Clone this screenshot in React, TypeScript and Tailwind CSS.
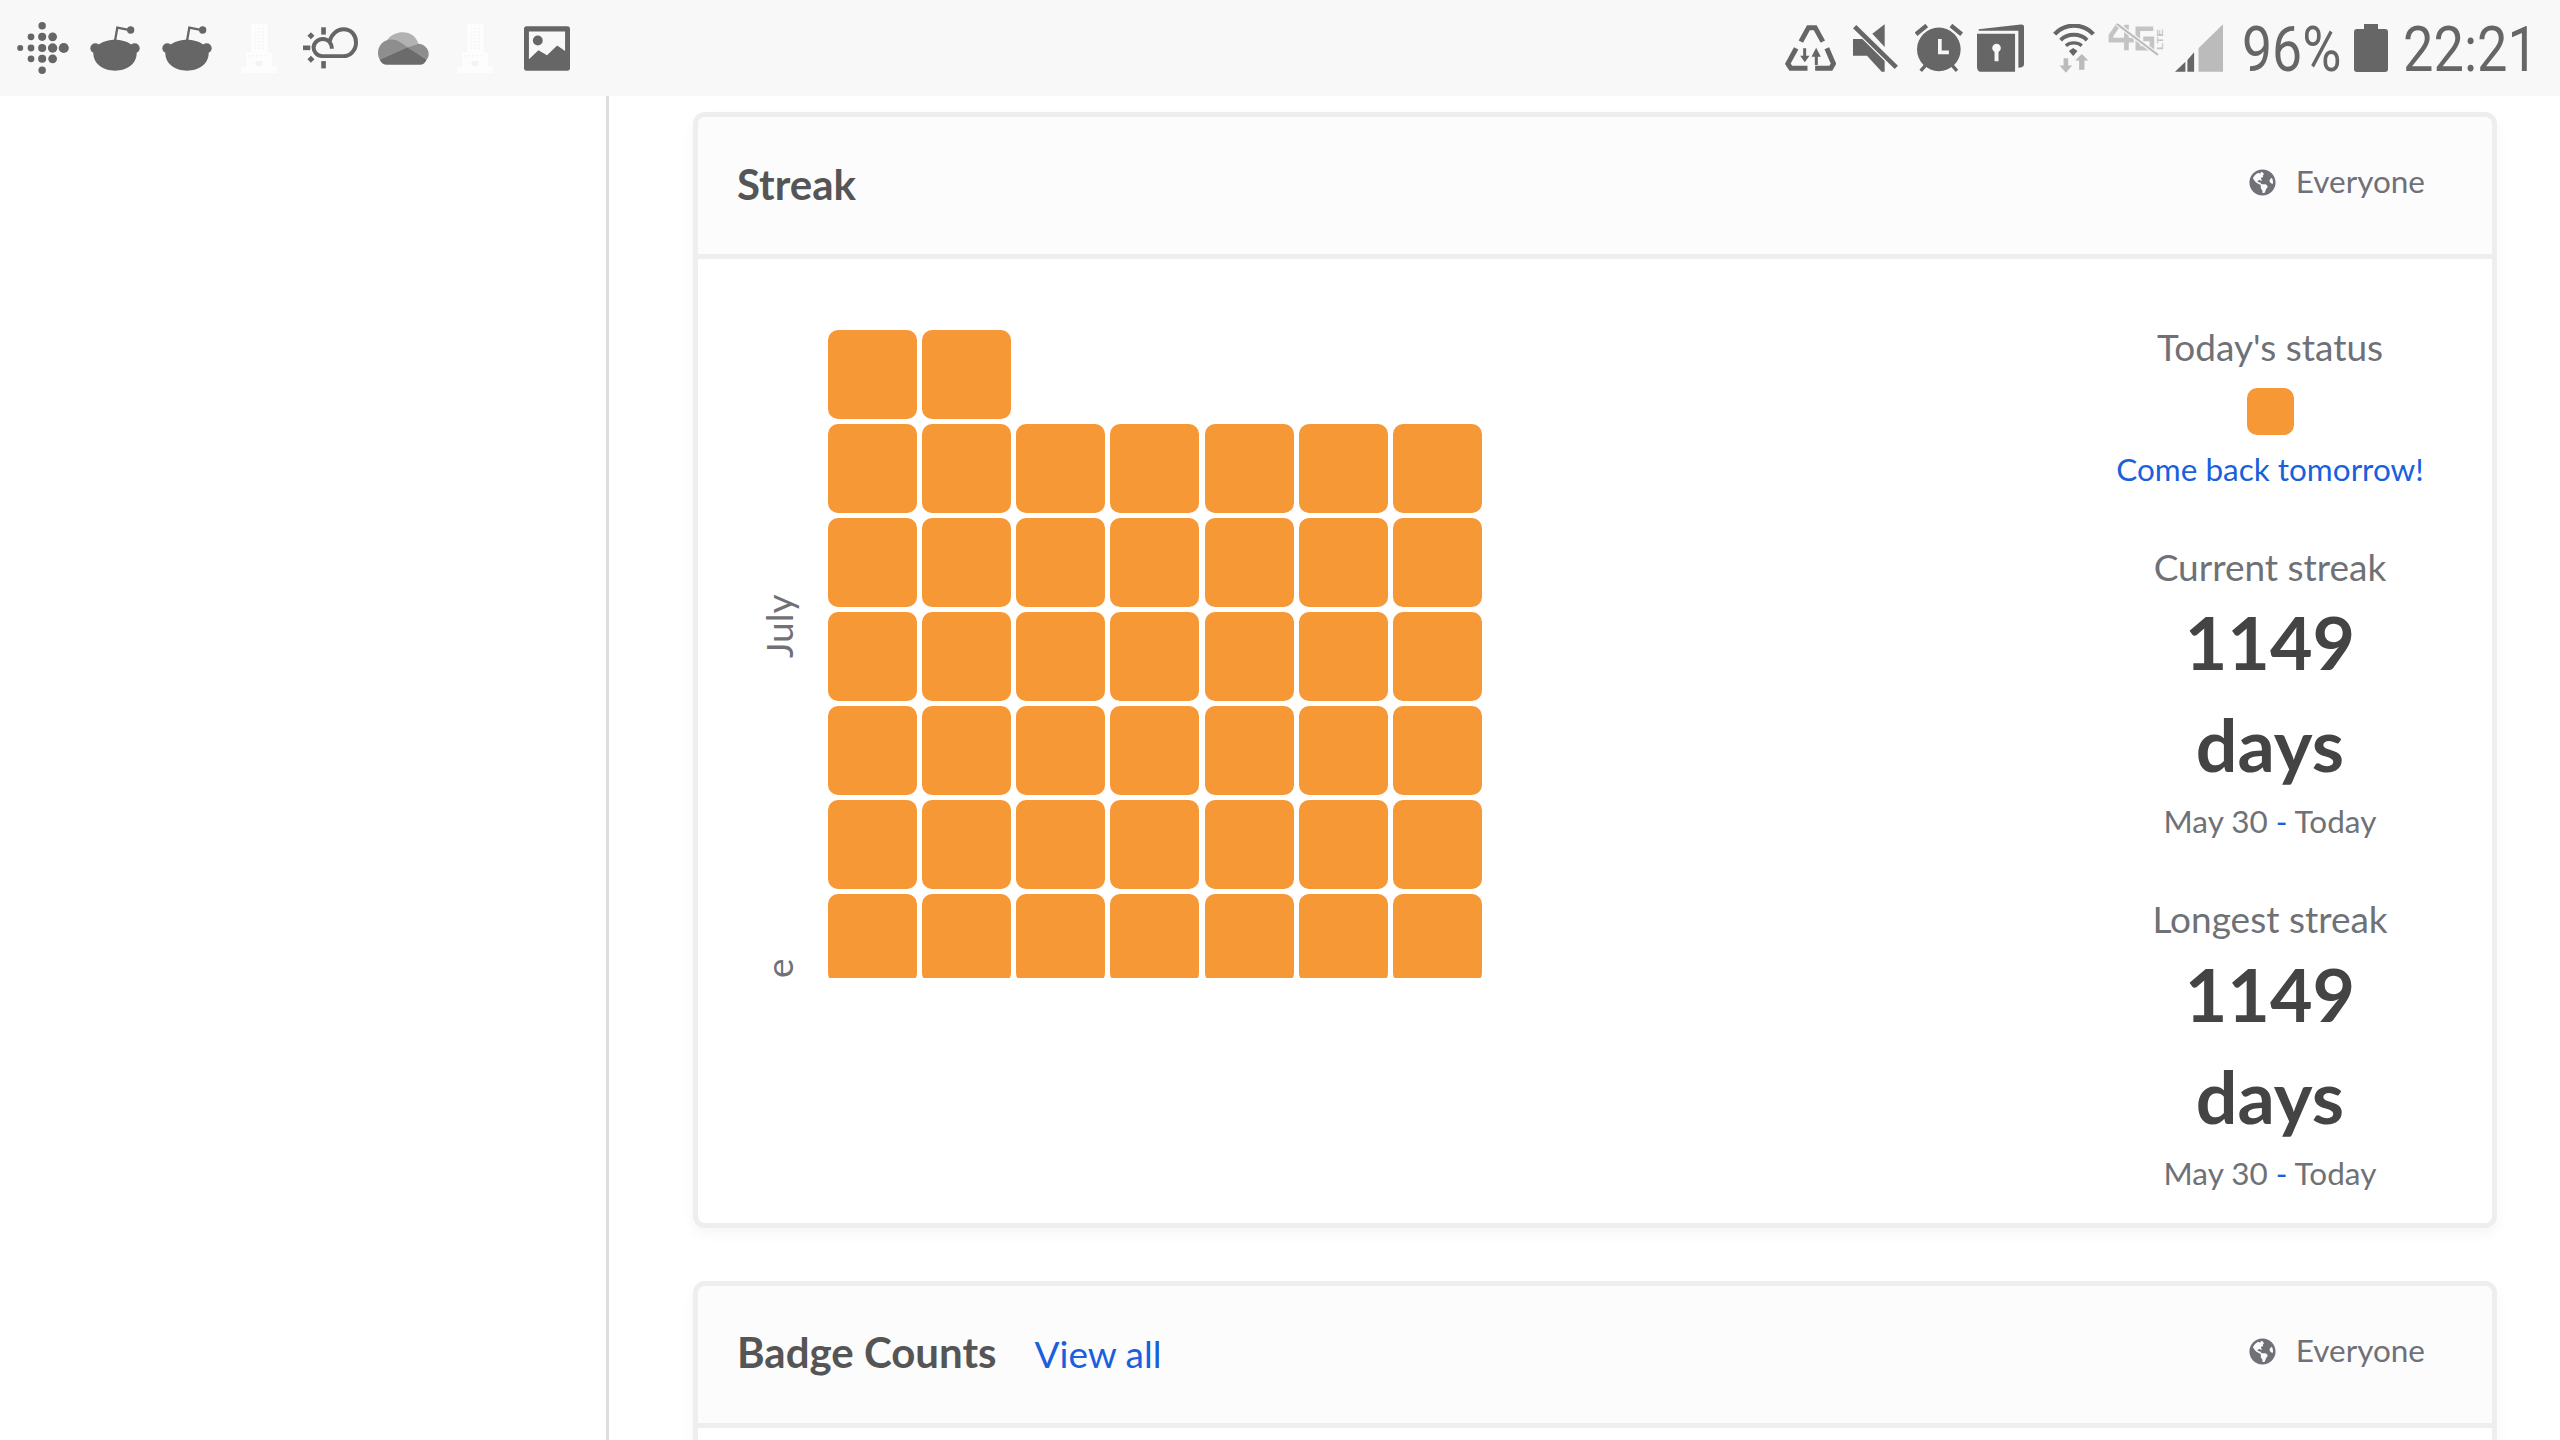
import { FaGlobeAmericas } from "react-icons/fa";

const cells = Array.from({ length: 42 });
const G = "#666666";
const L = "#bbbbbb";
const BG = "#f8f8f8";

function Everyone() {
  return (
    <div className="flex items-center gap-[20px] text-[#6f7177] text-[31.5px] leading-none mb-[7px]">
      <FaGlobeAmericas size={27} color="#6f7177" />
      <span>Everyone</span>
    </div>
  );
}

function StatBlock({ title }: { title: string }) {
  return (
    <div className="flex flex-col items-center mt-[54px]">
      <div className="text-[37px] leading-[44px] text-[#6f7177] whitespace-nowrap">{title}</div>
      <div className="text-[73.500px] leading-[102px] font-bold text-[#444444] text-center mt-[2px]">
        <div>1149</div>
        <div>days</div>
      </div>
      <div className="text-[31.500px] leading-[44px] text-[#6f7177] mt-[4px] whitespace-nowrap">
        May 30 <span className="text-[#1a5fdc]">-</span> Today
      </div>
    </div>
  );
}

function Fitbit() {
  const dots: [number, number, number][] = [
    [31, 99, 9], [63, 66, 10], [63, 99, 10], [63, 131, 10],
    [96, 33, 11], [96, 66, 12], [96, 99, 12], [96, 131, 12], [96, 165, 11],
    [127, 66, 13], [127, 99, 14], [127, 131, 13], [160, 99, 15],
  ];
  return (
    <svg width="52" height="52" viewBox="22 22 153 154">
      {dots.map(([x, y, r], i) => <circle key={i} cx={x} cy={y} r={r} fill={G} />)}
    </svg>
  );
}

function Reddit() {
  return (
    <svg width="50" height="46" viewBox="240 28 150 138">
      <path d="M315 76L322 36L352 42" stroke={G} strokeWidth="7" fill="none" />
      <circle cx="362" cy="43" r="11" fill={G} />
      <circle cx="256" cy="98" r="15" fill={G} />
      <circle cx="374" cy="98" r="15" fill={G} />
      <path d="M250 112C250 88 285 72 315 72C345 72 380 88 380 112C380 145 350 165 315 165C280 165 250 145 250 112z" fill={G} />
    </svg>
  );
}

function Tower() {
  const win: [number, number][] = [];
  for (let r = 0; r < 7; r++) for (let c = 0; c < 3; c++) win.push([44 + c * 11, 36 + r * 10]);
  for (let c = 0; c < 6; c++) win.push([26 + c * 11, 118]);
  return (
    <svg width="36" height="49" viewBox="3 25 107 147">
      <rect x="33" y="25" width="49" height="90" fill="#fdfdfd" />
      <rect x="18" y="110" width="77" height="45" fill="#fdfdfd" />
      <rect x="3" y="152" width="107" height="20" fill="#fdfdfd" />
      {win.map(([x, y], i) => <rect key={i} x={x} y={y} width="5" height="5" fill="#f5f5f5" />)}
      <rect x="46" y="136" width="21" height="14" fill="#f3f3f3" />
    </svg>
  );
}

function SunCloud() {
  return (
    <svg width="55" height="42" viewBox="190 38 166 125" fill="none">
      <path d="M270 82C275 60 292 44 312 44C336 44 350 62 350 84C350 108 332 125 312 125L248 125C232 125 222 112 222 100C222 85 235 73 250 73C266 73 277 86 277 103" stroke={G} strokeWidth="12" />
      <rect x="245" y="38" width="14" height="22" fill={G} />
      <rect x="245" y="140" width="14" height="22" fill={G} />
      <rect x="190" y="93" width="22" height="14" fill={G} />
      <rect x="206" y="56" width="15" height="15" fill={G} transform="rotate(45 214 64)" />
      <rect x="206" y="127" width="15" height="15" fill={G} transform="rotate(45 214 135)" />
    </svg>
  );
}

function OneDrive() {
  return (
    <svg width="52" height="33" viewBox="410 50 157 98">
      <path d="M440 75C450 58 470 50 488 50C510 50 528 62 535 85L505 97z" fill="#b2b2b2" />
      <path d="M418 132C404 105 420 72 455 72C470 72 485 82 502 96z" fill="#8e8e8e" />
      <path d="M502 96L535 85C550 85 566 100 566 115C566 122 564 128 560 132z" fill="#8e8e8e" />
      <path d="M418 132L502 95L560 132C556 142 548 148 540 148L440 148C430 148 422 142 418 132z" fill="#6b6b6b" />
    </svg>
  );
}

function Picture() {
  return (
    <svg width="46" height="45" viewBox="851 30 140 135">
      <rect x="851" y="30" width="140" height="135" rx="8" fill={G} />
      <path d="M866 46H976V105L952 88L921 118L895 103L866 130z" fill={BG} />
      <circle cx="893" cy="73" r="15" fill={G} />
    </svg>
  );
}

function Recycle() {
  return (
    <svg width="51" height="46" viewBox="45 30 152 138" fill="none">
      <path d="M92 80L115 38H135L158 80" stroke={G} strokeWidth="15" />
      <path d="M78 100L53 146L62 160H112" stroke={G} strokeWidth="15" />
      <path d="M170 100L190 146L182 160H135" stroke={G} strokeWidth="15" />
      <path d="M99 100H108V122H118L104 142L90 122H99z" fill={G} />
      <path d="M134 150V125H124L138 98L152 125H143V150z" fill={G} />
    </svg>
  );
}

function Mute() {
  return (
    <svg width="45" height="48" viewBox="250 28 135 142">
      <path d="M250 72H278L345 138V170H336L292 122H250z" fill={G} />
      <path d="M308 56L345 28V96z" fill={G} />
      <path d="M255 35L380 157" stroke={G} strokeWidth="14" />
    </svg>
  );
}

function Alarm() {
  return (
    <svg width="48" height="48" viewBox="435 28 143 142">
      <circle cx="506" cy="103" r="65" fill={G} />
      <path d="M438 58L470 32M574 58L542 32" stroke={G} strokeWidth="13" />
      <path d="M452 167L467 150M560 167L545 150" stroke={G} strokeWidth="10" />
      <path d="M509 72V112H536" stroke={BG} strokeWidth="11" fill="none" />
    </svg>
  );
}

function Vault() {
  return (
    <svg width="47" height="48" viewBox="620 26 142 144">
      <path d="M620 55H735V170H635Q620 170 620 155z" fill={G} />
      <path d="M625 41L752 27Q762 26 762 34V148Q762 155 755 156L745 158V46H625z" fill={G} />
      <circle cx="679" cy="98" r="13" fill={BG} />
      <rect x="673" y="104" width="12" height="34" fill={BG} />
    </svg>
  );
}

function Wifi() {
  return (
    <svg width="42" height="49" viewBox="68 25 127 147" fill="none">
      <path d="M73 55C105 21 158 21 190 55" stroke={G} strokeWidth="13" />
      <path d="M91 73C112 52 150 52 171 73" stroke={G} strokeWidth="12" />
      <path d="M107 90C120 79 142 79 155 90" stroke={G} strokeWidth="10" />
      <path d="M116 106L129 97L142 106L129 121z" fill={G} />
      <path d="M100 128H114V150H126L107 172L88 150H100z" fill={L} />
      <path d="M147 163V135H135L155 115L175 135H163V163z" fill={L} />
    </svg>
  );
}

function Lte() {
  return (
    <svg width="55" height="31" viewBox="238 28 164 92" fill="none" className="overflow-visible">
      <path d="M266 30L244 62V76H312M290 30V106" stroke="#c4c4c4" strokeWidth="14" />
      <path d="M370 42H324V100H366V72H340" stroke="#c4c4c4" strokeWidth="14" />
      <path d="M262 28L384 120" stroke={BG} strokeWidth="13" />
      <path d="M262 28L384 120" stroke="#bdbdbd" strokeWidth="6" />
      <text x="0" y="0" fill="#c4c4c4" fontSize="26" fontWeight="700" fontFamily="'Liberation Sans', sans-serif" textLength="62" lengthAdjust="spacingAndGlyphs" transform="translate(400 105) rotate(-90)">LTE</text>
    </svg>
  );
}

function Signal() {
  return (
    <svg width="48" height="48" viewBox="435 28 143 142">
      <path d="M435 170L466 140V170z" fill={G} />
      <path d="M472 170V135L492 112V170z" fill={G} />
      <path d="M505 170V100L578 28V170z" fill={L} />
    </svg>
  );
}

function Battery() {
  return (
    <svg width="34" height="48" viewBox="0 0 34 48">
      <path d="M10 0H24V5H31Q34 5 34 8V45Q34 48 31 48H3Q0 48 0 45V8Q0 5 3 5H10z" fill={G} />
    </svg>
  );
}

export default function App() {
  return (
    <div className="h-[1440px] w-[2560px] overflow-hidden bg-white font-['Lato','Liberation_Sans',sans-serif]">
      <header className="h-[96px] bg-[#f8f8f8] flex items-center justify-between">
        <div className="flex items-center h-full pl-[17px]">
          <Fitbit />
          <div className="ml-[21px]"><Reddit /></div>
          <div className="ml-[22px]"><Reddit /></div>
          <div className="ml-[29px]"><Tower /></div>
          <div className="ml-[26px]"><SunCloud /></div>
          <div className="ml-[19px]"><OneDrive /></div>
          <div className="ml-[28px]"><Tower /></div>
          <div className="ml-[31px]"><Picture /></div>
        </div>
        <div className="flex items-center h-full pr-[30px]">
          <Recycle />
          <div className="ml-[17px]"><Mute /></div>
          <div className="ml-[17px]"><Alarm /></div>
          <div className="ml-[14px]"><Vault /></div>
          <div className="ml-[29px]"><Wifi /></div>
          <div className="ml-[14px] self-start mt-[24px]"><Lte /></div>
          <div className="ml-[11px]"><Signal /></div>
          <div className="ml-[19px] w-[97px] mt-[3px] text-[63px] leading-none text-[#666666] font-['Roboto',sans-serif] origin-left scale-x-[0.85] whitespace-nowrap">96%</div>
          <div className="ml-[15px]"><Battery /></div>
          <div className="ml-[15px] w-[127px] mt-[3px] text-[63px] leading-none text-[#666666] font-['Roboto',sans-serif] origin-left scale-x-[0.86] whitespace-nowrap">22:21</div>
        </div>
      </header>
      <div className="flex">
        <aside className="w-[609px] h-[1344px] shrink-0 border-r-[3px] border-[#dedede]" />
        <main className="w-[1888px] pl-[84px] pt-[16px]">
          <section className="rounded-[12px] border-[5px] border-[#eeeeee] bg-white shadow-[0_6px_14px_rgba(0,0,0,0.04)] h-[1116px]">
            <div className="h-[142px] bg-[#fcfcfc] rounded-t-[8px] border-b-[5px] border-[#eeeeee] flex items-center justify-between pl-[39px] pr-[67px]">
              <h2 className="text-[42px] font-bold text-[#555555] mb-[3px]">Streak</h2>
              <Everyone />
            </div>
            <div className="flex">
              <div className="pl-[64px] pt-[71px] flex">
                <div className="w-[66px] h-[654px] relative text-[#6f7177] text-[37px]">
                  <span className="absolute left-[-1px] top-[328px] -rotate-90 origin-top-left whitespace-nowrap leading-[36px] h-[36px] block">July</span>
                  <span className="absolute left-[-1px] top-[648px] -rotate-90 origin-top-left whitespace-nowrap leading-[36px] h-[36px] block">e</span>
                </div>
                <div className="w-[654px] h-[648px] overflow-hidden flex flex-col gap-[5px]">
                  <div className="flex gap-[5px]">
                    <div className="w-[89px] h-[89px] rounded-[10px] bg-[#f79836]" />
                    <div className="w-[89px] h-[89px] rounded-[10px] bg-[#f79836]" />
                  </div>
                  <div className="grid grid-cols-7 gap-[5px]">
                    {cells.map((_, i) => (
                      <div key={i} className="w-[89px] h-[89px] rounded-[10px] bg-[#f79836]" />
                    ))}
                  </div>
                </div>
              </div>
              <div className="ml-auto w-[340px] mr-[52px] pt-[66px] flex flex-col items-center">
                <div className="text-[37px] leading-[44px] text-[#6f7177] whitespace-nowrap">Today's status</div>
                <div className="w-[47px] h-[47px] rounded-[10px] bg-[#f79836] mt-[19px]" />
                <div className="text-[31.500px] leading-[44px] text-[#1a5fdc] mt-[12px] whitespace-nowrap">Come back tomorrow!</div>
                <StatBlock title="Current streak" />
                <StatBlock title="Longest streak" />
              </div>
            </div>
          </section>
          <section className="mt-[53px] rounded-t-[12px] border-[5px] border-[#eeeeee] bg-white h-[300px] shadow-[0_6px_14px_rgba(0,0,0,0.04)]">
            <div className="h-[142px] bg-[#fcfcfc] rounded-t-[8px] border-b-[5px] border-[#eeeeee] flex items-center justify-between pl-[39px] pr-[67px]">
              <div className="flex items-baseline gap-[38px] mb-[4px]">
                <h2 className="text-[42px] font-bold text-[#555555]">Badge Counts</h2>
                <a className="text-[37px] text-[#1a5fdc]">View all</a>
              </div>
              <Everyone />
            </div>
          </section>
        </main>
      </div>
    </div>
  );
}
